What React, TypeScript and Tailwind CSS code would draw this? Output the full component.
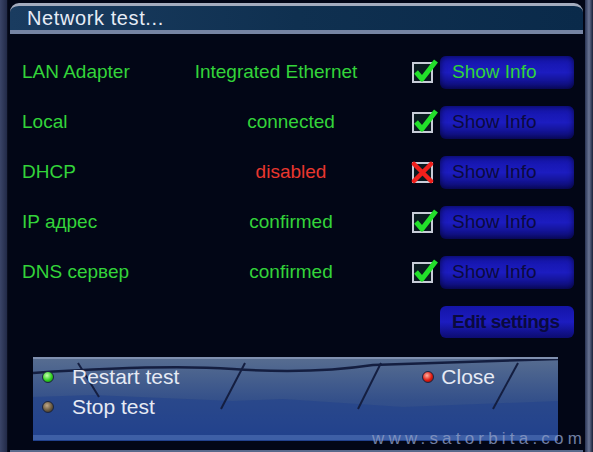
import React from "react";

type Row = { label: string; value: string; ok: boolean; focused?: boolean; shift?: boolean };

const rows: Row[] = [
  { label: "LAN Adapter", value: "Integrated Ethernet", ok: true, focused: true, shift: true },
  { label: "Local", value: "connected", ok: true },
  { label: "DHCP", value: "disabled", ok: false },
  { label: "IP адрес", value: "confirmed", ok: true },
  { label: "DNS сервер", value: "confirmed", ok: true },
];

function Check({ ok }: { ok: boolean }) {
  return (
    <div className="relative w-[21px] h-[21px] border-2 border-[#c8ccd8] bg-[#0a1a20]">
      {ok ? (
        <svg className="absolute -left-[1px] -top-[6px]" width="26" height="26" viewBox="0 0 26 26">
          <path d="M3 14 L9 21 L23 3" fill="none" stroke="#22e02a" strokeWidth="5" strokeLinejoin="round" />
        </svg>
      ) : (
        <svg className="absolute -left-[3px] -top-[3px]" width="23" height="23" viewBox="0 0 23 23">
          <path d="M3 3 L20 20 M20 3 L3 20" stroke="#f0201c" strokeWidth="4.5" strokeLinecap="round" />
        </svg>
      )}
    </div>
  );
}

function BlueButton({ label, focused }: { label: string; focused?: boolean }) {
  return (
    <div
      className={
        "w-[134px] h-[33px] rounded-[6px] flex items-center pl-[12px] text-[19px] bg-gradient-to-b from-[#1414a8] via-[#1c1cc0] to-[#0c0c70] shadow-[inset_0_0_6px_rgba(0,0,30,0.7)] " +
        (focused ? "text-[#2fd43a]" : "text-[#0a0a3e]")
      }
    >
      {label}
    </div>
  );
}

function Led({ color }: { color: string }) {
  return <div className={"w-[12px] h-[12px] rounded-full border border-[#1a2440] " + color} />;
}

export default function App() {
  return (
    <div
      className="relative w-[593px] h-[452px] overflow-hidden bg-[#020616] flex"
      style={{ fontFamily: '"Liberation Sans", Arial, sans-serif' }}
    >
      {/* left frame */}
      <div className="w-[8px] h-full bg-gradient-to-r from-[#3a4468] to-[#222a48] border-r border-[#0a0e20]" />

      <div className="flex-1 flex flex-col">
        {/* title bar */}
        <div className="mt-[3px] mx-[2px] h-[31px] rounded-t-[9px] border-t-[3px] border-b-[4px] border-t-[#a4acbe] border-b-[#7684a4] bg-gradient-to-r from-[#1a3c60] via-[#0f3050] to-[#0a2a4a] flex items-center pl-[17px]">
          <span className="text-[20px] tracking-[0.6px] text-[#e6ecf6] leading-none">Network test...</span>
        </div>

        {/* body */}
        <div className="flex-1 flex flex-col pt-[13px] pl-[14px]">
          {rows.map((r) => (
            <div key={r.label} className="h-[50px] flex items-center text-[19px]">
              <div className="w-[169px] text-[#33d43a]">{r.label}</div>
              <div
                className={
                  "w-[200px] text-center " +
                  (r.ok ? "text-[#33d43a]" : "text-[#e8362e]") +
                  (r.shift ? " pr-[30px]" : "")
                }
              >
                {r.value}
              </div>
              <div className="ml-[21px]">
                <Check ok={r.ok} />
              </div>
              <div className="ml-[7px]">
                <BlueButton label="Show Info" focused={r.focused} />
              </div>
            </div>
          ))}
          <div className="h-[50px] flex items-center justify-start pl-[418px]">
            <div className="w-[134px] h-[32px] rounded-[6px] flex items-center pl-[12px] text-[19px] font-bold tracking-[-0.5px] text-[#0a0a3e] bg-gradient-to-b from-[#1414a8] via-[#1c1cc0] to-[#0c0c70]">
              Edit settings
            </div>
          </div>

          {/* bottom panel */}
          <div className="relative mt-[10px] ml-[11px] w-[525px] h-[84px] border-t-2 border-[#8090b0] bg-gradient-to-b from-[#566c90] via-[#34508a] to-[#22428e] overflow-hidden">
            <svg className="absolute inset-0" width="525" height="84" viewBox="0 0 525 84">
              <path d="M0 96 L0 38 L60 36 L200 42 L250 40 L370 48 L525 42 L525 96 Z" fill="#1f3f8c" opacity="0.5" />
              <path d="M0 14 C60 10 140 6 200 10 C260 14 300 12 340 6 C400 4 460 2 525 0" fill="none" stroke="#141e40" strokeWidth="2.5" />
              <path d="M45 4 L66 38" stroke="#141e40" strokeWidth="2" />
              <path d="M212 4 L188 50" stroke="#141e40" strokeWidth="2" />
              <path d="M348 4 L325 50" stroke="#141e40" strokeWidth="2" />
              <path d="M485 4 L460 50" stroke="#141e40" strokeWidth="2" />
              <rect x="0" y="76" width="525" height="5" fill="#4a6cb0" opacity="0.7" />
            </svg>
            <div className="relative flex justify-between pt-[6px] pl-[9px] pr-[63px]">
              <div className="flex flex-col gap-[6px]">
                <div className="flex items-center gap-[18px] text-[21px] text-[#e6eaf4] leading-[24px]">
                  <Led color="bg-[radial-gradient(circle_at_40%_35%,#c8ffb0,#30d020_55%,#107010)]" />
                  Restart test
                </div>
                <div className="flex items-center gap-[18px] text-[21px] text-[#e6eaf4] leading-[24px]">
                  <Led color="bg-[radial-gradient(circle_at_40%_35%,#c0a888,#6a5a40_55%,#2a2418)]" />
                  Stop test
                </div>
              </div>
              <div className="flex items-start">
                <div className="flex items-center gap-[7px] text-[21px] text-[#e6eaf4] leading-[24px]">
                  <Led color="bg-[radial-gradient(circle_at_40%_35%,#ffb0a0,#e01a10_55%,#701008)]" />
                  Close
                </div>
              </div>
            </div>
          </div>
        </div>
        <div className="h-[5px] mx-[2px] border-b-2 border-[#5a6a8c]" />
      </div>

      {/* right frame */}
      <div className="w-[8px] h-full bg-gradient-to-r from-[#2a3454] via-[#6a7594] to-[#1a2038]" />

      {/* watermark */}
      <div className="absolute left-[372px] top-[426px] text-[17px] tracking-[4.2px] text-[#8c9cc4] opacity-80">
        www.satorbita.com
      </div>
    </div>
  );
}
